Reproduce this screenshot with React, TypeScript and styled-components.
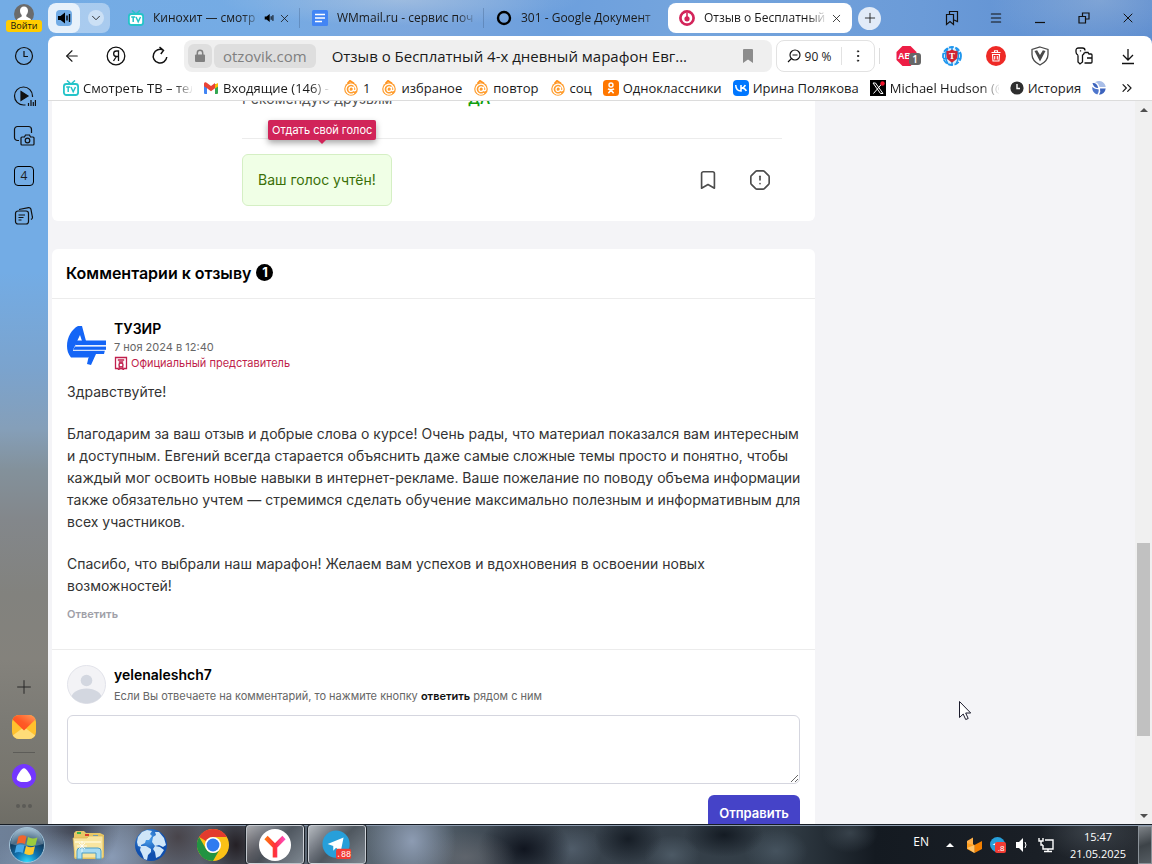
import React from 'react';
import styled, { createGlobalStyle, css } from 'styled-components';
import {
  ArrowLeft, Bookmark, ChevronDown, ChevronsRight, OctagonAlert, Plus, X, Menu, EllipsisVertical,
} from 'lucide-react';

const ui = '"Open Sans", "Noto Sans", sans-serif';
const site = 'Inter, "Noto Sans", sans-serif';

const GlobalStyle = createGlobalStyle`
  * { box-sizing: border-box; }
  body { margin: 0; overflow: hidden; font-family: ${ui}; font-size: 13px; color: #1a1a1a; }
  button { border: 0; padding: 0; background: none; font: inherit; color: inherit; cursor: pointer; }
  a { color: inherit; text-decoration: none; }
  svg { display: block; flex: none; }
  h2, h3, p { margin: 0; }
`;

const Screen = styled.div`
  display: flex;
  flex-direction: column;
  height: 100vh;
`;

const Window = styled.div`
  flex: 1;
  min-height: 0;
  display: flex;
  background:
    radial-gradient(ellipse 180px 26px at 400px 0, rgba(190, 208, 226, 0.5), transparent) no-repeat,
    radial-gradient(ellipse 110px 50px at 1100px 0, rgba(176, 196, 220, 0.4), transparent) no-repeat,
    linear-gradient(90deg, #73ace5 0, #75abe4 22%, #7ba6dd 36%, #6c9fdd 48%, #75a5dd 60%, #6b9bd8 80%, #5a8bcf 100%) 0 0 / 100% 46px no-repeat,
    linear-gradient(180deg, #73ace5 0, #73ace5 33%, #7ba3cd 45%, #859fb9 52%, #83919b 57%, #83878b 63%, #82827e 72%, #84827c 80%, #7b7a74 88%, #77756d 95%, #6e6d66 100%);
`;

/* ---------- side panel ---------- */

const Sidebar = styled.aside`
  width: 48px;
  flex: none;
  display: flex;
  flex-direction: column;
  align-items: center;
  padding-bottom: 8px;
`;

const Login = styled.button`
  height: 36px;
  display: flex;
  flex-direction: column;
  align-items: center;
  padding-top: 4px;
`;

const LoginLabel = styled.span`
  width: 36px;
  height: 12px;
  margin-top: -4px;
  position: relative;
  border-radius: 3px;
  background: #ffcc00;
  font: 400 9px/12px ${ui};
  text-align: center;
  color: #111;
`;

const SideButton = styled.button<{ $short?: boolean }>`
  width: 48px;
  height: ${p => (p.$short ? 20 : 40)}px;
  display: flex;
  align-items: center;
  justify-content: center;
`;

const Spacer = styled.div`
  flex: 1;
`;

const SideRule = styled.hr`
  width: 22px;
  height: 1px;
  border: 0;
  margin: 5px 0 3px;
  background: #5d5c58;
`;

const TabCount = styled.span`
  width: 20px;
  height: 20px;
  border: 1px solid #000;
  border-radius: 4px;
  font: 400 12px/18px ${ui};
  text-align: center;
`;

/* ---------- tab strip ---------- */

const Main = styled.div`
  flex: 1;
  min-width: 0;
  display: flex;
  flex-direction: column;
`;

const TabStrip = styled.div`
  height: 36px;
  flex: none;
  display: flex;
  align-items: center;
  padding-right: 2px;
`;

const TabGroup = styled.div`
  display: flex;
  width: 62px;
  height: 30px;
  flex: none;
  margin-right: 6px;
  border-radius: 8px;
  overflow: hidden;
  background: rgba(255, 255, 255, 0.38);
`;

const GroupButton = styled.button<{ $active?: boolean }>`
  width: 32px;
  height: 30px;
  flex: none;
  display: flex;
  align-items: center;
  justify-content: center;
  border-radius: 8px;
  background: ${p => (p.$active ? 'rgba(255, 255, 255, 0.72)' : 'none')};
`;

const GroupIcon = styled.span<{ $round?: boolean }>`
  width: 16px;
  height: 16px;
  display: flex;
  align-items: center;
  justify-content: center;
  border-radius: ${p => (p.$round ? 8 : 4)}px;
  background: ${p => (p.$round ? 'rgba(255, 255, 255, 0.4)' : '#73ace5')};
`;

const Tab = styled.div<{ $active?: boolean; $ruled?: boolean }>`
  flex: 0 1 184px;
  min-width: 0;
  height: 30px;
  display: flex;
  align-items: center;
  gap: 4px;
  padding: 0 9px 0 ${p => (p.$active ? 11 : 12)}px;
  border-radius: 8px;
  background: ${p => (p.$active ? '#fff' : 'none')};
  ${p => p.$ruled && css`
    border-radius: 0;
    background: linear-gradient(rgba(60, 90, 130, 0.35), rgba(60, 90, 130, 0.35)) right center / 1px 20px no-repeat;
  `}
`;

const fade = css`
  overflow: hidden;
  white-space: nowrap;
  mask-image: linear-gradient(90deg, #000 calc(100% - 18px), rgba(0, 0, 0, 0.1));
`;

const TabTitle = styled.button`
  flex: 1;
  min-width: 0;
  margin-left: 5px;
  font-size: 12px;
  line-height: 20px;
  text-align: left;
  ${fade}
`;

const NewTab = styled.button`
  width: 23px;
  height: 23px;
  flex: none;
  margin-left: 6px;
  display: flex;
  align-items: center;
  justify-content: center;
  border-radius: 50%;
  background: rgba(255, 255, 255, 0.8);
`;

const Cell = styled.button`
  width: 44px;
  height: 32px;
  flex: none;
  display: flex;
  align-items: center;
  justify-content: center;
`;

/* ---------- toolbar ---------- */

const Panel = styled.div`
  flex: 1;
  min-height: 0;
  display: flex;
  flex-direction: column;
  border-radius: 8px 8px 0 0;
  overflow: hidden;
  background: #fff;
`;

const Toolbar = styled.div`
  height: 40px;
  flex: none;
  display: flex;
  align-items: center;
  padding: 0 2px;
`;

const AddressBar = styled.div`
  flex: 1;
  min-width: 0;
  height: 32px;
  margin: 0 4px 0 2px;
  padding: 0 19px 0 4px;
  display: flex;
  align-items: center;
  border-radius: 8px;
  background: #efefef;
`;

const LockButton = styled.button`
  width: 24px;
  height: 24px;
  flex: none;
  display: flex;
  align-items: center;
  justify-content: center;
  border-radius: 6px;
  background: #dedede;
`;

const Domain = styled.button`
  height: 24px;
  flex: none;
  margin-left: 2px;
  padding: 0 9px;
  border-radius: 6px;
  background: #dedede;
  color: #808080;
  font: 400 15px/24px ${ui};
`;

const PageTitle = styled.input`
  flex: 1;
  min-width: 0;
  margin-left: 16px;
  padding: 0;
  border: 0;
  outline: 0;
  background: none;
  color: #1a1a1a;
  font: 400 15px/24px ${ui};
`;

const ZoomBox = styled.div`
  width: 99px;
  height: 32px;
  flex: none;
  display: flex;
  align-items: center;
  border: 1px solid #e2e2e2;
  border-radius: 8px;
`;

const ZoomButton = styled.button`
  flex: 1;
  display: flex;
  align-items: center;
  justify-content: center;
  gap: 4px;
  height: 18px;
  border-right: 1px solid #e2e2e2;
  font-size: 12px;
`;

const MoreButton = styled.button`
  width: 32px;
  display: flex;
  justify-content: center;
`;

const Divider = styled.span`
  width: 1px;
  height: 16px;
  margin: 0 6px 0 4px;
  background: #dcdcdc;
`;

const Bookmarks = styled.nav`
  height: 25px;
  flex: none;
  display: flex;
  align-items: center;
  gap: 11px;
  padding: 0 17px 0 15px;
  border-bottom: 1px solid #dcdcdc;
`;

const BookmarkLink = styled.a<{ $clip?: boolean }>`
  flex: ${p => (p.$clip ? '0 1 129px' : 'none')};
  min-width: 0;
  display: flex;
  align-items: center;
  gap: 4px;
  line-height: 20px;
`;

const BookmarkLabel = styled.span<{ $clip?: boolean }>`
  white-space: nowrap;
  ${p => p.$clip && fade}
`;

const MoreBookmarks = styled.button`
  margin-left: auto;
`;

/* ---------- page ---------- */

const Viewport = styled.div`
  flex: 1;
  min-height: 0;
  display: flex;
  overflow: hidden;
  background: #f4f4f7;
  font-family: ${site};
  font-size: 14px;
  color: #333;
`;

const Page = styled.main`
  flex: 1;
  min-width: 0;
  margin-top: -13px;
  padding-left: 4px;
`;

const Card = styled.section`
  max-width: 763px;
  margin-bottom: 28px;
  border-radius: 6px;
  background: #fff;
`;

const ReviewEnd = styled.div`
  padding: 0 33px 15px 190px;
`;

const Recommend = styled.div`
  display: flex;
  padding-bottom: 28px;
  border-bottom: 1px solid #ececec;
  line-height: 22px;
  color: #555;
`;

const RecommendName = styled.span`
  width: 226px;
`;

const RecommendValue = styled.strong`
  font-weight: 600;
  color: #0f9d0f;
`;

const Actions = styled.div`
  display: flex;
  align-items: center;
  padding-top: 15px;
`;

const Vote = styled.div`
  position: relative;
  height: 52px;
  margin-right: auto;
  padding: 0 15px;
  border: 1px solid #d5efc4;
  border-radius: 6px;
  background: #f0ffe6;
  color: #3a7008;
  line-height: 50px;
`;

const Tooltip = styled.div`
  position: absolute;
  left: 25px;
  top: -35px;
  padding: 0 4px;
  border-radius: 2px;
  background: #d12459;
  box-shadow: 0 3px 6px rgba(0, 0, 0, 0.35);
  color: #fff;
  font-size: 11px;
  line-height: 20px;
  white-space: nowrap;

  &::after {
    content: '';
    position: absolute;
    left: 50%;
    top: 100%;
    margin-left: -4px;
    border: 4px solid transparent;
    border-top-color: #d12459;
  }
`;

const IconButton = styled.button`
  width: 52px;
  height: 52px;
  display: flex;
  align-items: center;
  justify-content: center;
  color: #4d4d4d;

  &:last-child { margin-right: -4px; }
`;

const CardTitle = styled.h2`
  height: 50px;
  display: flex;
  align-items: center;
  gap: 5px;
  padding: 0 14px 2px;
  border-bottom: 1px solid #ececec;
  font-size: 16px;
  font-weight: 600;
  color: #000;
`;

const Count = styled.span`
  width: 17px;
  height: 17px;
  border-radius: 50%;
  background: #000;
  color: #fff;
  font-size: 13px;
  font-weight: 700;
  line-height: 17px;
  text-align: center;
`;

const Comment = styled.article`
  padding: 20px 15px 27px;
  border-bottom: 1px solid #ececec;
`;

const Author = styled.div`
  display: flex;
  align-items: center;
  gap: 8px;
`;

const Name = styled.h3`
  font-size: 14px;
  font-weight: 600;
  line-height: 20px;
  color: #000;
`;

const Meta = styled.div`
  font-size: 11px;
  line-height: 16px;
  color: #666;
`;

const Official = styled.div`
  display: flex;
  align-items: center;
  gap: 3px;
  font-size: 11px;
  line-height: 16px;
  color: #c01f4c;
`;

const CommentText = styled.div`
  display: flex;
  flex-direction: column;
  gap: 20px;
  margin: 10px -8px 0 0;
  line-height: 22px;
`;

const ReplyLink = styled.button`
  display: block;
  margin-top: 9px;
  font-size: 11px;
  font-weight: 600;
  line-height: 16px;
  color: #a0a0a8;
`;

const ReplyForm = styled.form`
  display: flex;
  flex-direction: column;
  gap: 11px;
  padding: 15px;
`;

const Hint = styled.label`
  display: block;
  margin-top: 3px;
  font-size: 11px;
  line-height: 16px;
  color: #666;

  b { font-weight: 600; color: #111; }
`;

const ReplyBox = styled.textarea`
  width: 100%;
  height: 69px;
  padding: 10px;
  border: 1px solid #d5d6df;
  border-radius: 6px;
  outline: 0;
  background: #fff;
  font: 400 14px/22px ${site};
  resize: vertical;
`;

const Submit = styled.button`
  align-self: flex-end;
  width: 92px;
  height: 36px;
  border-radius: 6px;
  background: #4543c8;
  color: #fff;
  font-size: 13px;
  font-weight: 600;
`;

const Scrollbar = styled.div`
  width: 17px;
  flex: none;
  display: flex;
  flex-direction: column;
  background: #f0f0f0;
`;

const ScrollArrow = styled.button`
  height: 17px;
  display: flex;
  align-items: center;
  justify-content: center;
`;

const Track = styled.div<{ $part: number; $thumb?: boolean }>`
  flex: ${p => p.$part};
  margin: 0 2px;
  background: ${p => (p.$thumb ? '#c1c1c1' : 'none')};
`;

const Pointer = styled.div`
  position: fixed;
  left: 958px;
  top: 700px;
`;

/* ---------- taskbar ---------- */

const Taskbar = styled.footer`
  height: 40px;
  flex: none;
  display: flex;
  align-items: center;
  border-top: 1px solid #161c24;
  box-shadow: inset 0 1px 0 #8d9caf;
  color: #fff;
  background:
    radial-gradient(ellipse 60px 34px at 50px 40px, rgba(150, 175, 205, 0.6), transparent),
    radial-gradient(ellipse 46px 50px at 74px 0, rgba(45, 45, 55, 0.7), transparent),
    radial-gradient(ellipse 44px 44px at 112px 32px, rgba(150, 170, 200, 0.7), transparent),
    radial-gradient(ellipse 46px 46px at 178px 12px, rgba(60, 50, 52, 0.7), transparent),
    radial-gradient(ellipse 38px 46px at 236px 20px, rgba(30, 24, 28, 0.9), transparent),
    radial-gradient(ellipse 44px 50px at 412px 16px, rgba(150, 165, 190, 0.85), transparent),
    radial-gradient(ellipse 50px 26px at 466px 32px, rgba(110, 112, 118, 0.6), transparent),
    radial-gradient(ellipse 46px 34px at 524px 24px, rgba(8, 12, 22, 0.85), transparent),
    radial-gradient(ellipse 30px 24px at 572px 24px, rgba(85, 98, 112, 0.8), transparent),
    radial-gradient(ellipse 34px 26px at 628px 14px, rgba(14, 20, 28, 0.8), transparent),
    radial-gradient(ellipse 28px 20px at 672px 30px, rgba(82, 96, 108, 0.8), transparent),
    radial-gradient(ellipse 40px 22px at 724px 10px, rgba(12, 18, 26, 0.8), transparent),
    radial-gradient(ellipse 32px 22px at 776px 26px, rgba(74, 88, 100, 0.8), transparent),
    radial-gradient(ellipse 28px 20px at 850px 8px, rgba(74, 86, 96, 0.6), transparent),
    radial-gradient(ellipse 50px 30px at 1090px 6px, rgba(74, 82, 90, 0.6), transparent),
    linear-gradient(90deg, #6e8098 0, #6a7586 12%, #5e6876 20%, #586570 36%, #3e4852 43%, #36404a 55%, #323d46 68%, #141a21 76%, #1a1f26 90%, #2b3036 100%);
`;

const Task = styled.button<{ $open?: boolean }>`
  width: ${p => (p.$open ? 58 : 62)}px;
  height: 39px;
  flex: none;
  display: flex;
  align-items: center;
  justify-content: center;
  ${p => p.$open && css`
    margin: 0 2px;
    border: 1px solid rgba(225, 230, 235, 0.75);
    border-radius: 3px;
    outline: 1px solid #1b2128;
    background: linear-gradient(135deg, rgba(255, 255, 255, 0.55) 0, rgba(120, 120, 125, 0.5) 35%, rgba(70, 75, 80, 0.55) 50%, rgba(140, 148, 156, 0.7) 100%);
  `}
`;

const Start = styled(Task)`
  width: 58px;
  padding-right: 4px;
`;

const Tray = styled.div`
  margin-left: auto;
  display: flex;
  align-items: center;
`;

const TrayButton = styled.button`
  width: 24px;
  height: 24px;
  display: flex;
  align-items: center;
  justify-content: center;
`;

const Language = styled.button`
  margin: 0 9px 6px 0;
  font-size: 12px;
  line-height: 16px;
`;

const Clock = styled.time`
  width: 80px;
  text-align: center;
  font-size: 11px;
  line-height: 17px;
`;

const ShowDesktop = styled.button`
  width: 14px;
  height: 38px;
  border: 1px solid #8b9299;
  background: linear-gradient(160deg, #7d8287, #3d4348 50%, #555c62);
`;

/* ---------- icons ---------- */

const stroke = { fill: 'none', stroke: '#111', strokeWidth: 1.2 } as const;

const UserIcon = () => (
  <svg width="20" height="20" viewBox="0 0 20 20">
    <circle cx="10" cy="10" r="10" fill="#6b6b6b" />
    <path d="M10 2.500c2.500 0 4 1.800 4 4.200 0 2-.8 3.300-1.700 4.200v1.600l4.500 2.500V20H3.200v-5l4.500-2.500v-1.600C6.800 10 6 8.700 6 6.700c0-2.400 1.500-4.200 4-4.200z" fill="#fff" />
  </svg>
);
const ClockIcon = () => (
  <svg width="20" height="20" viewBox="0 0 20 20" {...stroke}><circle cx="10" cy="10" r="8.500" /><path d="M10 5v5.500h4" /></svg>
);
const PlayIcon = () => (
  <svg width="24" height="22" viewBox="0 0 24 22" {...stroke}>
    <path d="M13.500 20H11.500a9 9 0 1 1 9-9v1" /><path d="M9 6.500l7 4.500-7 4.500z" fill="#111" />
    <path d="M16.500 21v-3M19 21v-6M21.300 21v-4M23.400 21v-6" />
  </svg>
);
const ShotIcon = () => (
  <svg width="22" height="22" viewBox="0 0 22 22" {...stroke}>
    <path d="M6 15.500H4.500a3 3 0 0 1-3-3v-8a3 3 0 0 1 3-3h11a3 3 0 0 1 3 3V8" />
    <path d="M9 12h2.500l1-2h4l1 2H20a1 1 0 0 1 1 1v6a1 1 0 0 1-1 1H9a1 1 0 0 1-1-1v-6a1 1 0 0 1 1-1z" /><circle cx="14.500" cy="15.500" r="2.300" />
  </svg>
);
const NotesIcon = () => (
  <svg width="20" height="20" viewBox="0 0 20 20" {...stroke}>
    <rect x="1.500" y="5" width="13" height="13" rx="2.500" /><path d="M4.500 9h6.500M4.500 11.500h5M4.500 14h3M5 3.500L14.500 1.600a2 2 0 0 1 2.400 1.600L18.400 11a2 2 0 0 1-1.500 2.400" />
  </svg>
);
const MailIcon = () => (
  <svg width="24" height="24" viewBox="0 0 24 24">
    <clipPath id="mail"><rect width="24" height="24" rx="7" /></clipPath>
    <linearGradient id="mailTop" x1="0" y1="1" x2="1" y2="0"><stop offset="0" stopColor="#ff4a1c" /><stop offset="0.5" stopColor="#ff5a26" /><stop offset="1" stopColor="#ff9e5c" /></linearGradient>
    <g clipPath="url(#mail)"><path fill="#ffc12e" d="M0 0h24v24H0z" /><path fill="#ffdc78" d="M0 21L12 12l12 9v3H0z" /><path fill="url(#mailTop)" d="M0 0h24v4L12 15.500 0 4z" /></g>
  </svg>
);
const AliceIcon = () => (
  <svg width="24" height="24" viewBox="0 0 24 24"><circle cx="12" cy="12" r="12" fill="#7436ff" /><path d="M12 4.200c2.500 0 7.300 7.600 7.300 10.300 0 2.700-3.800 3.600-7.300 3.600s-7.300-.9-7.300-3.600C4.700 11.800 9.500 4.200 12 4.200z" fill="#fff" /></svg>
);
const DotsIcon = () => (
  <svg width="18" height="6" viewBox="0 0 18 6" fill="#5c5b57"><circle cx="3" cy="3" r="2" /><circle cx="9" cy="3" r="2" /><circle cx="15" cy="3" r="2" /></svg>
);
const SoundIcon = ({ size = 14 }: { size?: number }) => (
  <svg width={size} height={size} viewBox="0 0 14 14"><path d="M1 5h2.500L8 1.500v11L3.500 9H1z" fill="#000" /><path d="M10 4.500v5M12.500 3v8" stroke="#000" strokeWidth="1.400" /></svg>
);
const TvIcon = () => (
  <svg width="16" height="16" viewBox="0 0 16 16">
    <path d="M4 .5L8 4l4-3.500" fill="none" stroke="#25c4c9" strokeWidth="1.500" /><rect x=".9" y="4" width="14.200" height="11" rx="2.500" fill="#fff" stroke="#25c4c9" strokeWidth="1.800" />
    <path d="M3.200 7h4M5.200 7v5M8 7l2.200 4.800L12.500 7" fill="none" stroke="#25c4c9" strokeWidth="1.500" />
  </svg>
);
const DocIcon = () => (
  <svg width="16" height="16" viewBox="0 0 16 16"><rect width="16" height="16" rx="1.500" fill="#4285f4" /><path d="M3 4.500h10M3 8h10M3 11.500h7" stroke="#fff" strokeWidth="1.700" /></svg>
);
const RingIcon = () => (
  <svg width="16" height="16" viewBox="0 0 16 16"><circle cx="8" cy="8" r="6" fill="none" stroke="#000" strokeWidth="2.400" /></svg>
);
const OtzovikIcon = () => (
  <svg width="16" height="16" viewBox="0 0 16 16"><circle cx="8" cy="8" r="6.600" fill="none" stroke="#d3245a" strokeWidth="2.700" /><circle cx="8" cy="8.800" r="2.600" fill="#d3245a" /><path d="M8 3v4" stroke="#d3245a" strokeWidth="1.600" /></svg>
);
const SavedIcon = () => (
  <svg width="16" height="16" viewBox="0 0 16 16" {...stroke}><path d="M2.500 4.500h7v10L6 11.500l-3.500 3z" /><path d="M5.500 4V1.500h8v10l-3.500-1.500" /></svg>
);
const MinimizeIcon = () => <svg width="12" height="16" viewBox="0 0 12 16" {...stroke}><path d="M1 12.500h10" /></svg>;
const RestoreIcon = () => (
  <svg width="12" height="12" viewBox="0 0 12 12" {...stroke}><path d="M1 4.500h6.500V11H1z" /><path d="M4.500 4V1H11v6H8" /></svg>
);
const YaIcon = () => (
  <svg width="20" height="20" viewBox="0 0 20 20" {...stroke} strokeWidth="1.300"><circle cx="10" cy="10" r="8.800" /><path d="M12.500 15V5H10.400a2.700 2.700 0 0 0 0 5.500h2M10.400 10.500L7.500 15" /></svg>
);
const ReloadIcon = () => (
  <svg width="18" height="20" viewBox="0 0 18 20" {...stroke} strokeWidth="1.500"><path d="M15.800 11a6.800 6.800 0 1 1-3.500-6.800M8.500 1L12.500 4.400 9.800 8" /></svg>
);
const LockIcon = () => (
  <svg width="12" height="14" viewBox="0 0 12 14"><rect x="1" y="5.500" width="10" height="7.500" rx="1" fill="#808080" /><path d="M3.300 6V4a2.700 2.700 0 0 1 5.400 0v2" fill="none" stroke="#808080" strokeWidth="1.500" /></svg>
);
const FlagIcon = () => <svg width="10" height="14" viewBox="0 0 10 14"><path d="M0 1a1 1 0 0 1 1-1h8a1 1 0 0 1 1 1v13L5 10.500 0 14z" fill="#8c8c8c" /></svg>;
const ZoomOutIcon = () => (
  <svg width="14" height="14" viewBox="0 0 14 14" {...stroke}><circle cx="8" cy="6" r="5" /><path d="M4.500 9.500L1 13M5.500 6h5" /></svg>
);
const AdblockIcon = () => (
  <svg width="26" height="22" viewBox="0 0 26 22">
    <path d="M7.500 1h8l6 6v8l-6 6h-8l-6-6V7z" fill="#ed1e45" /><text x="3" y="14" fontSize="9" fontWeight="700" fontFamily="Liberation Sans, sans-serif" fill="#fff">AB</text>
    <rect x="14" y="8" width="12" height="12" rx="3" fill="#666" /><text x="20" y="18" fontSize="10" textAnchor="middle" fontWeight="600" fontFamily="Open Sans, sans-serif" fill="#fff">1</text>
  </svg>
);
const GlobeShieldIcon = () => (
  <svg width="20" height="20" viewBox="0 0 20 20">
    <circle cx="10" cy="10" r="9" fill="#dff0fc" stroke="#1e96ee" strokeWidth="1.800" strokeDasharray="5 1.500" />
    <path d="M10 1v18M1 7.500h18M1 12.500h18M6 2c-3 5-3 11 0 16M14 2c3 5 3 11 0 16" fill="none" stroke="#1e96ee" strokeWidth="1.500" />
    <path d="M4.500 5Q8 5 10 3.500 12 5 15.500 5v5c0 3-3 5-5.500 6.500C7.500 15 4.500 13 4.500 10z" fill="#d02535" /><text x="10" y="13" fontSize="9" fontWeight="700" fontFamily="Liberation Serif, serif" textAnchor="middle" fill="#fff">T</text>
  </svg>
);
const TrashIcon = () => (
  <svg width="20" height="20" viewBox="0 0 20 20"><circle cx="10" cy="10" r="10" fill="#ee2a26" /><path d="M5.500 6.500h9M8.500 6V4.800h3V6M6.500 8.500h7l-.5 6.500H7zM8.700 10v3.500M11.300 10v3.500" fill="none" stroke="#fff" strokeWidth="1.100" /></svg>
);
const ShieldIcon = () => (
  <svg width="20" height="20" viewBox="0 0 20 20"><path d="M10 1l8 2.500v5c0 5-4 8.500-8 10.500-4-2-8-5.500-8-10.500v-5z" fill="none" stroke="#4a4a4a" strokeWidth="1.300" /><path d="M4.500 5l2.600-.7L10 9l2.900-4.700 2.600.7L10 15.500z" fill="#4a4a4a" /></svg>
);
const KeyIcon = () => (
  <svg width="18" height="18" viewBox="0 0 18 18" {...stroke} strokeWidth="1.300">
    <path d="M3 8.200Q1 7.200 1 5V3.500Q1 1 3.500 1h4Q10 1 10 3.500" /><path d="M3 8.200V15l2 2 2.500-2V8.200Q9 7.200 9.500 5.500M5.500 3.200v1.200" />
    <path d="M9.500 5.500H13l1 1.500h2Q17 7 17 8v7q0 1-1 1H9.500M12 11h5" />
  </svg>
);
const DownloadIcon = () => (
  <svg width="14" height="18" viewBox="0 0 14 18" {...stroke} strokeWidth="1.300"><path d="M7 2v11M2 8l5 5 5-5M1 16.500h12" /></svg>
);
const AtIcon = () => (
  <svg width="16" height="16" viewBox="0 0 16 16">
    <circle cx="8" cy="9" r="6.800" fill="#ff9d2e" /><path d="M4.500 3.500L7 .8l4 2.700" fill="none" stroke="#ff9320" strokeWidth="1.800" />
    <path d="M11 13.200a5 5 0 1 1 2-4.200c0 2.200-2.700 2.500-2.500 0l.3-2.300M10.500 9c-.2 3-4.500 3.200-4.500.3s4-3.400 4.500-.3z" fill="none" stroke="#fff" strokeWidth="1.300" />
  </svg>
);
const GmailIcon = () => (
  <svg width="16" height="12" viewBox="0 0 16 12"><path d="M1 2h3v10H2a1 1 0 0 1-1-1z" fill="#4285f4" /><path d="M12 2h3v9a1 1 0 0 1-1 1h-2z" fill="#34a853" /><path d="M12 2.500L15 1v3.500l-3 2z" fill="#fbbc04" /><path d="M1 2C1 .2 2.700-.2 4 .9l4 3 4-3v5.300l-4 3-4-3-3-2z" fill="#ea4335" /></svg>
);
const OkIcon = () => (
  <svg width="16" height="16" viewBox="0 0 16 16"><rect width="16" height="16" rx="3.500" fill="#ff7700" /><circle cx="8" cy="5" r="2" fill="none" stroke="#fff" strokeWidth="1.400" /><path d="M5 8.800q3 1.900 6 0M8 10l-2.600 3.200M8 10l2.600 3.200" fill="none" stroke="#fff" strokeWidth="1.500" /></svg>
);
const VkIcon = () => (
  <svg width="16" height="16" viewBox="0 0 16 16"><rect width="16" height="16" rx="4" fill="#0077ff" /><path d="M2.700 5c.2 3.800 2 6 5.300 6V5M8 8.300c2-.2 3.600-1.500 4.300-3.300M9 8c2 .2 3.500 1.300 4.300 3" fill="none" stroke="#fff" strokeWidth="1.600" /></svg>
);
const XIcon = () => (
  <svg width="16" height="16" viewBox="0 0 16 16"><path d="M0 0h16v16H0z" /><path d="M3 3h2.500l7.500 10.500h-2.500zM12.500 3L3.500 13.500" fill="none" stroke="#fff" /><circle cx="12.500" cy="3.500" r="2.200" fill="#f0142c" /></svg>
);
const HistoryIcon = () => (
  <svg width="14" height="14" viewBox="0 0 14 14"><circle cx="7" cy="7" r="6.600" fill="#2e2e2e" /><path d="M7 3v4.500h3" fill="none" stroke="#fff" strokeWidth="1.400" /></svg>
);
const PieIcon = () => (
  <svg width="14" height="14" viewBox="0 0 14 14"><path d="M.5 2Q5 1.500 6.200 7 1.500 7 .5 2z" fill="#3c63bd" /><path d="M3 1.200A6.800 6.800 0 0 1 13.700 6H7.500Q6.500 2 3 1.200z" fill="#a9bee8" /><path d="M8 7.500h5.700A6.800 6.800 0 0 1 7 13.700Q9 11 8 7.500z" fill="#3c63bd" /><path d="M.3 6Q3 8.500 6.500 8.300 7.300 11 5.300 13.500A6.800 6.800 0 0 1 .3 6z" fill="#4f76cc" /></svg>
);
const TuzirLogo = () => (
  <svg width="39" height="39" viewBox="0 0 39 39">
    <path d="M11 0h4l4 15-4 0-2-6L6 24h32l-1 4-12 0-4 3.500-17 0C1 28 0 24 0 20 0 11 5 3 11 0z" fill="#1465f6" />
    <path d="M9 14.500h30v5H8zM8 20.500h31V24H6zM21 28h8l-5 11-4-1 1.500-6.500z" fill="#1465f6" /><path d="M8.500 19.700H39M6 24.300H39" stroke="#fff" strokeWidth="1" />
  </svg>
);
const DiplomaIcon = () => (
  <svg width="14" height="14" viewBox="0 0 14 14" fill="none" stroke="#c01f4c" strokeWidth="1.300"><path d="M4 12.500H1.500v-11h11v11H10M3.800 4h6.400M4.800 6h4.400" /><circle cx="7" cy="9" r="2" /><path d="M5.500 10.500L4.500 13.500 7 12.300l2.500 1.200-1-3" /></svg>
);
const AvatarIcon = () => (
  <svg width="39" height="39" viewBox="0 0 39 39"><clipPath id="av"><circle cx="19.500" cy="19.500" r="19" /></clipPath><circle cx="19.500" cy="19.500" r="19" fill="#f3f3f6" stroke="#e2e3ea" /><g clipPath="url(#av)" fill="#d3d7e0"><circle cx="19.500" cy="15.500" r="5.800" /><ellipse cx="19.500" cy="34" rx="15.500" ry="10.500" /></g></svg>
);
const WindowsOrb = () => (
  <svg width="38" height="38" viewBox="0 0 38 38">
    <radialGradient id="orb" cx=".5" cy="1" r=".95"><stop offset="0" stopColor="#2fe0ff" /><stop offset=".35" stopColor="#1276b4" /><stop offset=".7" stopColor="#123c5e" /><stop offset="1" stopColor="#7fa3bd" /></radialGradient>
    <circle cx="19" cy="19" r="17.500" fill="url(#orb)" stroke="#a4c3d8" /><path d="M3 18a16 16 0 0 1 32 0c-9 3-22 3-32 0z" fill="#fff" opacity=".25" />
    <path d="M10.500 10.500q4-2.500 8 0L17 18q-4-2-8.300 0z" fill="#f0652d" /><path d="M20 11q4 2.500 9.500.5L27.500 19q-4.500 2-9-.5z" fill="#9ccc3d" /><path d="M8.300 19.500q4-2 8.200 0L14.700 27q-4-2-8 0z" fill="#45a8e8" /><path d="M18 20q4.500 2.200 9 .3L25.200 28q-4.500 2-9-.5z" fill="#fcc930" />
  </svg>
);
const FolderIcon = () => (
  <svg width="34" height="30" viewBox="0 0 34 30">
    <path d="M2 3l2-2h8l2 2h14l4 2v22l-3 2H3l-1-2z" fill="#e8c765" /><path d="M5 2h4v2H5z" fill="#3bb54a" /><path d="M13 4h4v2h-4z" fill="#d9402b" /><path d="M21 5h5v2h-5z" fill="#3b8ee0" /><path d="M1 8h14l2-2h14v22H3z" fill="#f8e5a0" stroke="#d8b555" strokeWidth=".7" /><path d="M3 11h26v2H3z" fill="#fdf3c8" />
    <path d="M5 29v-8a3 3 0 0 1 3-3h18a3 3 0 0 1 3 3v8h-5v-6H10v6z" fill="#a5daf2" stroke="#4e9dc4" /><path d="M10 11v11M5 16h10M7 13l6 6M13 13l-6 6" stroke="#fff" strokeWidth=".8" />
  </svg>
);
const EarthIcon = () => (
  <svg width="32" height="32" viewBox="0 0 32 32"><radialGradient id="sea" cx=".4" cy=".3"><stop offset="0" stopColor="#4ba2ee" /><stop offset="1" stopColor="#0f4fae" /></radialGradient><circle cx="16" cy="16" r="16" fill="url(#sea)" /><path d="M3 8l4-5 5-2 5 1-2 3 2 2-3 4-3 0-1 3-4 2 0 2-3-1-1-4zM18 8l3-2-1-3 4 0 5 6 2 7-3 2-4-2-4 1-3-4zM6 17l5 0 5 3 0 3-3 3-1 5-3-1-2-5-2-4zM20 17l5 1 4 3-4 6-4 2-1-6-2-3z" fill="#cfe6f8" /></svg>
);
const ChromeIcon = () => (
  <svg width="32" height="32" viewBox="0 0 32 32"><circle cx="16" cy="16" r="16" fill="#fbc116" /><path d="M2.140 8A16 16 0 0 1 29.860 8H16A8 8 0 0 0 9 12z" fill="#e33b2e" /><path d="M2.140 8A16 16 0 0 0 16 32l6.900-12A8 8 0 0 1 9.100 20z" fill="#229342" /><circle cx="16" cy="16" r="8" fill="#fff" /><circle cx="16" cy="16" r="6.400" fill="#2f7bf0" /></svg>
);
const YBrowserIcon = () => (
  <svg width="32" height="32" viewBox="0 0 32 32"><circle cx="16" cy="16" r="16" fill="#fff" /><linearGradient id="yb" gradientUnits="userSpaceOnUse" x1="6" x2="26" y1="10" y2="10"><stop offset="0" stopColor="#ff7a10" /><stop offset=".5" stopColor="#ff2f3b" /><stop offset="1" stopColor="#ff4fc8" /></linearGradient><path d="M7 8.500l9 9v11M16 17.500l9-9" fill="none" stroke="url(#yb)" strokeWidth="4.600" /></svg>
);
const TelegramIcon = ({ size, badge }: { size: number; badge: string }) => (
  <svg width={size} height={size} viewBox="0 0 32 32" overflow="visible"><circle cx="15" cy="15" r="14.500" fill="#279fda" /><path d="M6 15L23 8l-3 15-5-4-3 3v-5z" fill="#fff" /><rect x="15" y="20" width="16" height="11" rx="2" fill="#f23c34" /><text x="23" y="29" fontSize="9" fontFamily="Liberation Mono, monospace" textAnchor="middle" fill="#fff">{badge}</text></svg>
);
const TelegramTrayIcon = () => (
  <svg width="16" height="16" viewBox="0 0 16 16"><circle cx="7.500" cy="7.500" r="7.500" fill="#279fda" /><path d="M2.500 7.500L8 5v4z" fill="#fff" /><rect x="5" y="5" width="11" height="11" rx="2" fill="#f23c34" /><text x="11" y="14" fontSize="8" fontFamily="Liberation Sans, sans-serif" textAnchor="middle" fill="#fff">.8</text></svg>
);
const BoxIcon = () => (
  <svg width="15" height="16" viewBox="0 0 15 16"><path d="M0 4l7.500 4v8L0 12z" fill="#ff9d1d" /><path d="M0 4l6-3.500V8L0 6z" fill="#ffb04a" /><path d="M15 4v8l-7.500 4V8z" fill="#f27f00" /><path d="M0 11l7.500-3v8z" fill="#ffc46b" /></svg>
);
const VolumeIcon = () => (
  <svg width="14" height="16" viewBox="0 0 14 16"><path d="M1 5h3l4-4v14l-4-4H1z" fill="#fff" /><path d="M10 5q2 3 0 6" fill="none" stroke="#fff" /></svg>
);
const NetworkIcon = () => (
  <svg width="16" height="16" viewBox="0 0 16 16" fill="none" stroke="#fff" strokeWidth="1.400"><path d="M7 3h8v9H5V8M10 12v2M6 14.500h8M1 1v3h4V1M3 4v4h2" /></svg>
);
const ArrowGlyph = ({ down, light }: { down?: boolean; light?: boolean }) => (
  <svg width="8" height="4" viewBox="0 0 8 4"><path d={down ? 'M0 0h8L4 4z' : 'M0 4h8L4 0z'} fill={light ? '#fff' : '#505050'} /></svg>
);
const CursorIcon = () => (
  <svg width="14" height="22" viewBox="0 0 14 22"><path d="M1.500 1.500v16l3.700-3.500 2.500 5.500 2.500-1-2.500-5.500h5z" fill="#fff" stroke="#1b1b2c" /></svg>
);

/* ---------- data ---------- */

const tabs = [
  { icon: <TvIcon />, title: 'Кинохит — смотр', sound: true, close: true, ruled: true },
  { icon: <DocIcon />, title: 'WMmail.ru - сервис поч', ruled: true },
  { icon: <RingIcon />, title: '301 - Google Документ' },
  { icon: <OtzovikIcon />, title: 'Отзыв о Бесплатный', close: true, active: true },
];

const links = [
  { icon: <TvIcon />, label: 'Смотреть ТВ – тел', clip: true },
  { icon: <GmailIcon />, label: 'Входящие (146) -', clip: true },
  { icon: <AtIcon />, label: '1' },
  { icon: <AtIcon />, label: 'избраное' },
  { icon: <AtIcon />, label: 'повтор' },
  { icon: <AtIcon />, label: 'соц' },
  { icon: <OkIcon />, label: 'Одноклассники' },
  { icon: <VkIcon />, label: 'Ирина Полякова' },
  { icon: <XIcon />, label: 'Michael Hudson (@', clip: true },
  { icon: <HistoryIcon />, label: 'История' },
];

const paragraphs = [
  'Здравствуйте!',
  'Благодарим за ваш отзыв и добрые слова о курсе! Очень рады, что материал показался вам интересным и доступным. Евгений всегда старается объяснить даже самые сложные темы просто и понятно, чтобы каждый мог освоить новые навыки в интернет-рекламе. Ваше пожелание по поводу объема информации также обязательно учтем — стремимся сделать обучение максимально полезным и информативным для всех участников.',
  'Спасибо, что выбрали наш марафон! Желаем вам успехов и вдохновения в освоении новых возможностей!',
];

export default function App() {
  return (
    <Screen>
      <GlobalStyle />
      <Window>
        <Sidebar>
          <Login><UserIcon /><LoginLabel>Войти</LoginLabel></Login>
          <SideButton aria-label="История"><ClockIcon /></SideButton>
          <SideButton aria-label="Видео"><PlayIcon /></SideButton>
          <SideButton aria-label="Скриншот"><ShotIcon /></SideButton>
          <SideButton aria-label="Вкладки"><TabCount>4</TabCount></SideButton>
          <SideButton aria-label="Коллекции"><NotesIcon /></SideButton>
          <Spacer />
          <SideButton aria-label="Добавить"><Plus size={22} strokeWidth={1} color="#222" /></SideButton>
          <SideButton aria-label="Почта"><MailIcon /></SideButton>
          <SideRule />
          <SideButton aria-label="Алиса"><AliceIcon /></SideButton>
          <SideButton $short aria-label="Ещё"><DotsIcon /></SideButton>
        </Sidebar>

        <Main>
          <TabStrip>
            <TabGroup>
              <GroupButton $active aria-label="Звук"><GroupIcon><SoundIcon /></GroupIcon></GroupButton>
              <GroupButton aria-label="Группы"><GroupIcon $round><ChevronDown size={14} strokeWidth={1.5} /></GroupIcon></GroupButton>
            </TabGroup>
            {tabs.map(t => (
              <Tab key={t.title} $active={t.active} $ruled={t.ruled}>
                {t.icon}
                <TabTitle>{t.title}</TabTitle>
                {t.sound && <SoundIcon size={10} />}
                {t.close && <button aria-label="Закрыть вкладку"><X size={13} strokeWidth={1.5} /></button>}
              </Tab>
            ))}
            <NewTab aria-label="Новая вкладка"><Plus size={16} strokeWidth={1.3} /></NewTab>
            <Spacer />
            <Cell aria-label="Закладки"><SavedIcon /></Cell>
            <Cell aria-label="Меню"><Menu size={14} strokeWidth={1.8} color="#111" /></Cell>
            <Cell aria-label="Свернуть"><MinimizeIcon /></Cell>
            <Cell aria-label="Восстановить"><RestoreIcon /></Cell>
            <Cell aria-label="Закрыть"><X size={16} strokeWidth={1.5} color="#111" /></Cell>
          </TabStrip>

          <Panel>
            <Toolbar>
              <Cell aria-label="Назад"><ArrowLeft size={18} strokeWidth={1.5} /></Cell>
              <Cell aria-label="Яндекс"><YaIcon /></Cell>
              <Cell aria-label="Обновить"><ReloadIcon /></Cell>
              <AddressBar>
                <LockButton aria-label="Защита"><LockIcon /></LockButton>
                <Domain>otzovik.com</Domain>
                <PageTitle aria-label="Адрес" readOnly value="Отзыв о Бесплатный 4-х дневный марафон Евг..." />
                <button aria-label="В закладки"><FlagIcon /></button>
              </AddressBar>
              <ZoomBox>
                <ZoomButton><ZoomOutIcon />90 %</ZoomButton>
                <MoreButton aria-label="Ещё"><EllipsisVertical size={16} strokeWidth={1.5} /></MoreButton>
              </ZoomBox>
              <Divider />
              <Cell aria-label="Adblock"><AdblockIcon /></Cell>
              <Cell aria-label="Переводчик"><GlobeShieldIcon /></Cell>
              <Cell aria-label="Очистка"><TrashIcon /></Cell>
              <Cell aria-label="Защита"><ShieldIcon /></Cell>
              <Cell aria-label="Пароли"><KeyIcon /></Cell>
              <Cell aria-label="Загрузки"><DownloadIcon /></Cell>
            </Toolbar>
            <Bookmarks>
              {links.map(l => (
                <BookmarkLink key={l.label} href="#" $clip={l.clip}>
                  {l.icon}<BookmarkLabel $clip={l.clip}>{l.label}</BookmarkLabel>
                </BookmarkLink>
              ))}
              <BookmarkLink href="#" aria-label="Статистика"><PieIcon /></BookmarkLink>
              <MoreBookmarks aria-label="Ещё закладки"><ChevronsRight size={16} strokeWidth={1.8} /></MoreBookmarks>
            </Bookmarks>

            <Viewport>
              <Page>
                <Card>
                  <ReviewEnd>
                    <Recommend>
                      <RecommendName>Рекомендую друзьям</RecommendName>
                      <RecommendValue>ДА</RecommendValue>
                    </Recommend>
                    <Actions>
                      <Vote>Ваш голос учтён!<Tooltip>Отдать свой голос</Tooltip></Vote>
                      <IconButton aria-label="Сохранить"><Bookmark size={22} strokeWidth={1.8} /></IconButton>
                      <IconButton aria-label="Пожаловаться"><OctagonAlert size={22} strokeWidth={1.8} /></IconButton>
                    </Actions>
                  </ReviewEnd>
                </Card>

                <Card>
                  <CardTitle>Комментарии к отзыву <Count>1</Count></CardTitle>
                  <Comment>
                    <Author>
                      <TuzirLogo />
                      <div>
                        <Name>ТУЗИР</Name>
                        <Meta>7 ноя 2024 в 12:40</Meta>
                        <Official><DiplomaIcon />Официальный представитель</Official>
                      </div>
                    </Author>
                    <CommentText>{paragraphs.map(p => <p key={p}>{p}</p>)}</CommentText>
                    <ReplyLink>Ответить</ReplyLink>
                  </Comment>
                  <ReplyForm>
                    <Author>
                      <AvatarIcon />
                      <div>
                        <Name>yelenaleshch7</Name>
                        <Hint htmlFor="reply">Если Вы отвечаете на комментарий, то нажмите кнопку <b>ответить</b> рядом с ним</Hint>
                      </div>
                    </Author>
                    <ReplyBox id="reply" />
                    <Submit type="button">Отправить</Submit>
                  </ReplyForm>
                </Card>
              </Page>
              <Scrollbar>
                <ScrollArrow aria-label="Вверх"><ArrowGlyph /></ScrollArrow>
                <Track $part={425} />
                <Track $part={193} $thumb />
                <Track $part={71} />
                <ScrollArrow aria-label="Вниз"><ArrowGlyph down /></ScrollArrow>
              </Scrollbar>
            </Viewport>
          </Panel>
        </Main>
      </Window>

      <Taskbar>
        <Start aria-label="Пуск"><WindowsOrb /></Start>
        <Task aria-label="Проводник"><FolderIcon /></Task>
        <Task aria-label="Интернет"><EarthIcon /></Task>
        <Task aria-label="Chrome"><ChromeIcon /></Task>
        <Task $open aria-label="Яндекс Браузер"><YBrowserIcon /></Task>
        <Task $open aria-label="Telegram"><TelegramIcon size={30} badge=".88" /></Task>
        <Tray>
          <Language>EN</Language>
          <TrayButton aria-label="Скрытые значки"><ArrowGlyph light /></TrayButton>
          <TrayButton aria-label="Приложение"><BoxIcon /></TrayButton>
          <TrayButton aria-label="Сообщения"><TelegramTrayIcon /></TrayButton>
          <TrayButton aria-label="Громкость"><VolumeIcon /></TrayButton>
          <TrayButton aria-label="Сеть"><NetworkIcon /></TrayButton>
          <Clock>15:47<br />21.05.2025</Clock>
          <ShowDesktop aria-label="Показать рабочий стол" />
        </Tray>
      </Taskbar>
      <Pointer><CursorIcon /></Pointer>
    </Screen>
  );
}
